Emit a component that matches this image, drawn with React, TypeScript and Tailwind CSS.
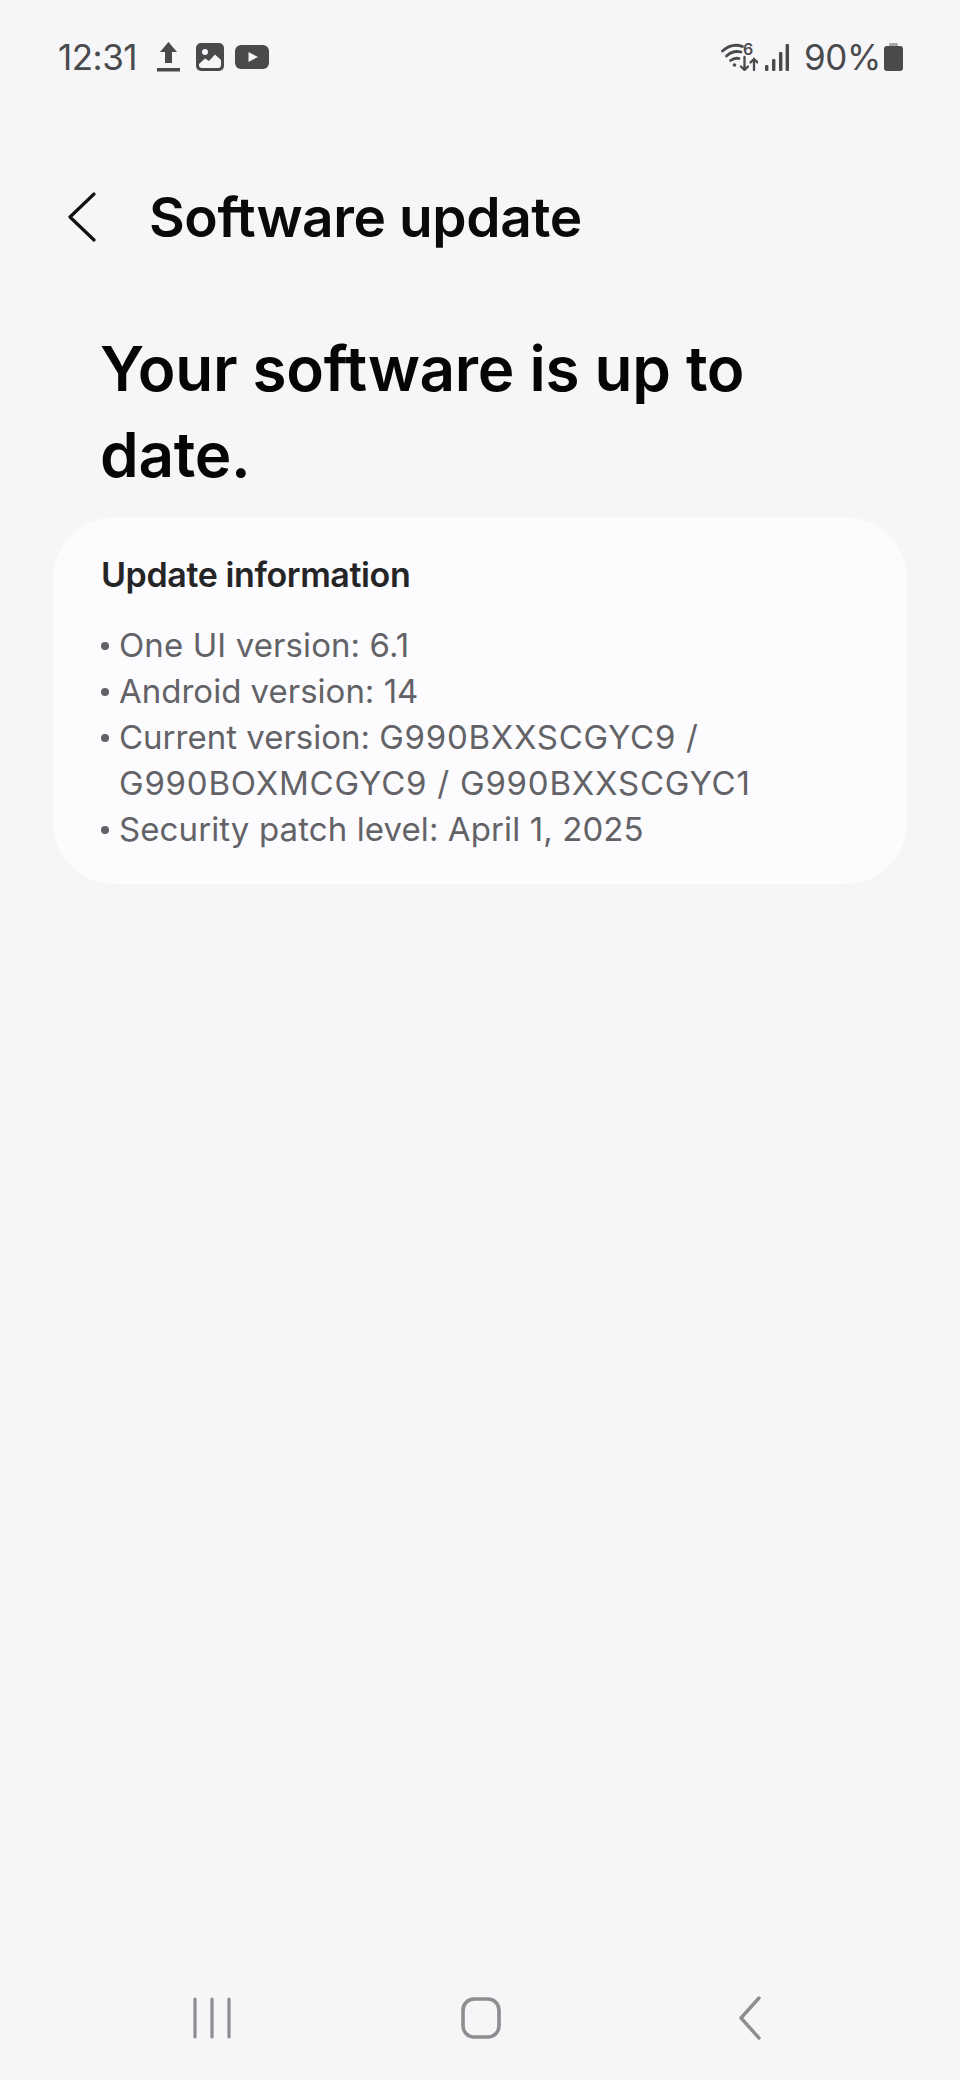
const FONT = "font-['Inter','Noto_Sans',sans-serif]";

function WifiIcon() {
  return (
    <div className="relative h-[28px] w-[37px]">
      <svg className="h-[28px] w-[37px]" viewBox="0 0 37 28" fill="none" stroke="#4a4a4d" strokeLinecap="round">
        <path d="M1.5 8 Q11 -0.5 21.5 3.5" strokeWidth="2.8" />
        <path d="M5.5 13 Q12 7 20 9" strokeWidth="2.8" />
        <path d="M9.5 17.5 Q13.5 14.5 18 15.5" strokeWidth="2.8" />
        <circle cx="13.5" cy="22" r="1.8" fill="#4a4a4d" strokeWidth="0" />
        <path d="M23.5 14 V27 M20 23.5 L23.5 27 L27 23.5" strokeWidth="2.3" />
        <path d="M33 27 V16 M29.5 19.5 L33 16 L36.5 19.5" strokeWidth="2.3" />
      </svg>
      <span className="absolute left-[22px] top-[-2px] text-[16px] font-semibold leading-[16px]">6</span>
    </div>
  );
}

function StatusBar() {
  return (
    <div className="flex h-[114px] items-center justify-between pl-[58px] pr-[57px] text-[#4a4a4d]">
      <div className="flex items-center">
        <span className="text-[35px] font-normal tracking-[-0.5px]">12:31</span>
        {/* upload */}
        <svg className="ml-[20px] h-[32px] w-[23px]" viewBox="0 0 23 32" fill="#4a4a4d">
          <path d="M11.5 1 L20 11 H15 V22 H8 V11 H3 Z" />
          <rect x="0" y="27" width="23" height="3.5" />
        </svg>
        {/* picture */}
        <svg className="ml-[16px] h-[28px] w-[28px]" viewBox="0 0 28 28">
          <rect width="28" height="28" rx="5" fill="#4a4a4d" />
          <circle cx="9" cy="9" r="3" fill="#f6f6f9" />
          <path d="M3 21 L9 15.5 L13 18 L19 11.5 L25 17 V22 Q25 25 22 25 H6 Q3 25 3 22 Z" fill="#f6f6f9" />
        </svg>
        {/* video */}
        <svg className="ml-[11px] h-[24px] w-[34px]" viewBox="0 0 34 24">
          <rect width="34" height="24" rx="6" fill="#4a4a4d" />
          <path d="M13.5 7 L23 12 L13.5 17 Z" fill="#f6f6f9" />
        </svg>
      </div>
      <div className="flex items-center">
        <WifiIcon />
        {/* signal */}
        <svg className="ml-[7px] h-[27px] w-[24px]" viewBox="0 0 24 27" fill="#4a4a4d">
          <rect x="0" y="21" width="3.4" height="6" rx="1" />
          <rect x="7" y="15" width="3.4" height="12" rx="1" />
          <rect x="14" y="8" width="3.4" height="19" rx="1" />
          <rect x="20.6" y="0" width="3.4" height="27" rx="1" />
        </svg>
        <span className="ml-[15px] text-[35px] font-normal tracking-[-0.4px]">90%</span>
        {/* battery */}
        <svg className="ml-[3px] h-[28px] w-[19px]" viewBox="0 0 19 28">
          <rect x="5" y="0" width="9" height="4" rx="1" fill="#a8a8ab" />
          <rect x="0" y="3" width="19" height="25" rx="3" fill="#4a4a4d" />
        </svg>
      </div>
    </div>
  );
}

export default function App() {
  return (
    <div className={`flex h-[2080px] w-[960px] flex-col bg-[#f6f6f9] ${FONT}`}>
      <StatusBar />

      {/* app bar */}
      <div className="mt-[74px] flex h-[58px] items-center pl-[68px]">
        <svg className="h-[50px] w-[28px]" viewBox="0 0 28 50" fill="none" stroke="#111" strokeWidth="3.2" strokeLinecap="round" strokeLinejoin="round">
          <path d="M26 2 L2 25 L26 48" />
        </svg>
        <h1 className="ml-[53px] text-[55px] font-semibold tracking-[-0.4px] text-[#0a0a0a]">Software update</h1>
      </div>

      <h2 className="ml-[100px] mt-[80px] w-[760px] text-[62px] font-semibold leading-[86px] tracking-[-0.3px] text-[#050505]">
        Your software is up to date.
      </h2>

      <div className="mx-[53px] mt-[19px] flex h-[367px] flex-col rounded-[62px] bg-[#fcfcfe] pl-[48px] pt-[36px]">
        <h3 className="text-[34px] font-semibold leading-[44px] tracking-[-0.4px] text-[#252528]">Update information</h3>
        <ul className="mt-[25px] text-[33px] font-normal leading-[46px] text-[#636367]">
          <li className="flex tracking-[0.1px]">
            <span className="mr-[10px] mt-[20px] h-[8px] w-[8px] shrink-0 rounded-full bg-[#636367]" />
            <div className="whitespace-nowrap">One UI version: 6.1</div>
          </li>
          <li className="flex">
            <span className="mr-[10px] mt-[20px] h-[8px] w-[8px] shrink-0 rounded-full bg-[#636367]" />
            <div className="whitespace-nowrap">Android version: 14</div>
          </li>
          <li className="flex">
            <span className="mr-[10px] mt-[20px] h-[8px] w-[8px] shrink-0 rounded-full bg-[#636367]" />
            <div>
              <div className="whitespace-nowrap">
                Current version: <span className="tracking-[0.7px]">G990BXXSCGYC9 /</span>
              </div>
              <div className="whitespace-nowrap tracking-[0.77px]">G990BOXMCGYC9 / G990BXXSCGYC1</div>
            </div>
          </li>
          <li className="flex tracking-[0.1px]">
            <span className="mr-[10px] mt-[20px] h-[8px] w-[8px] shrink-0 rounded-full bg-[#636367]" />
            <div className="whitespace-nowrap">Security patch level: April 1, 2025</div>
          </li>
        </ul>
      </div>

      {/* nav bar */}
      <div className="mb-[40px] mt-auto flex h-[44px] items-center pl-[192px]">
        <svg className="h-[42px] w-[40px]" viewBox="0 0 40 42" stroke="#8e8e91" strokeWidth="3.2" strokeLinecap="round">
          <path d="M3 2 V40 M20 2 V40 M37 2 V40" />
        </svg>
        <svg className="ml-[229px] h-[42px] w-[40px]" viewBox="0 0 40 42" fill="none" stroke="#8e8e91" strokeWidth="3.6">
          <rect x="2" y="2" width="36" height="38" rx="11" />
        </svg>
        <svg className="ml-[237px] h-[44px] w-[24px]" viewBox="0 0 24 44" fill="none" stroke="#8e8e91" strokeWidth="3.4" strokeLinecap="round" strokeLinejoin="round">
          <path d="M21 2 L3 22 L21 42" />
        </svg>
      </div>
    </div>
  );
}
